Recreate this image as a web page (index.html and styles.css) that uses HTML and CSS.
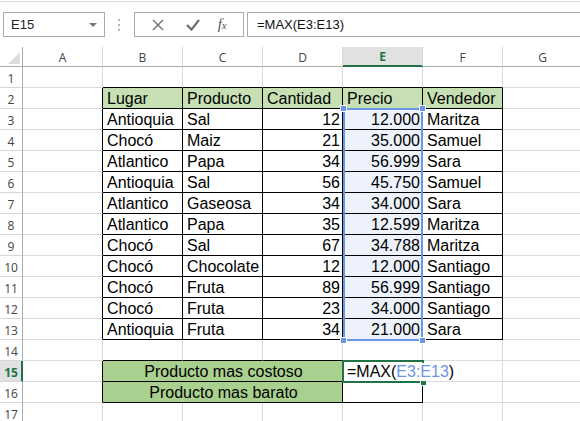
FILE: index.html
```html
<!DOCTYPE html>
<html>
<head>
<meta charset="utf-8">
<link rel="stylesheet" href="styles.css">
</head>
<body>
<div class="topbar">
  <div class="namebox"><span class="nb-text">E15</span><span class="caret"></span></div>
  <div class="dots"><i></i><i></i><i></i></div>
  <div class="fxbox">
    <svg class="ico" width="20" height="20" viewBox="0 0 20 20"><path d="M5 5 L15 15 M15 5 L5 15" stroke="#6f6f6f" stroke-width="1.4" fill="none"/></svg>
    <svg class="ico" width="20" height="20" viewBox="0 0 20 20"><path d="M4 10 L8.5 14.5 L16 5" stroke="#6f6f6f" stroke-width="2.2" fill="none"/></svg>
    <span class="fx">f<span class="fxx">x</span></span>
  </div>
  <div class="formula">=MAX(E3:E13)</div>
</div>

<div class="stack">
  <div class="sheet">
    <div class="corner"><svg width="23" height="20" viewBox="0 0 23 20"><polygon points="8,17 20,17 20,5" fill="#dcdcdc"/></svg></div>
    <div class="ch">A</div><div class="ch">B</div><div class="ch">C</div><div class="ch">D</div><div class="ch act">E</div><div class="ch">F</div><div class="ch">G</div>

    <div class="rh">1</div><div class="c"></div><div class="c ab"></div><div class="c ab"></div><div class="c ab"></div><div class="c ab"></div><div class="c ab"></div><div class="c"></div>

    <div class="rh">2</div><div class="c lf"></div><div class="c t hd">Lugar</div><div class="c t hd">Producto</div><div class="c t hd">Cantidad</div><div class="c t hd">Precio</div><div class="c t hd">Vendedor</div><div class="c"></div>

    <div class="rh">3</div><div class="c lf"></div><div class="c t">Antioquia</div><div class="c t">Sal</div><div class="c t n">12</div><div class="c t n sel">12.000</div><div class="c t">Maritza</div><div class="c"></div>
    <div class="rh">4</div><div class="c lf"></div><div class="c t">Chocó</div><div class="c t">Maiz</div><div class="c t n">21</div><div class="c t n sel">35.000</div><div class="c t">Samuel</div><div class="c"></div>
    <div class="rh">5</div><div class="c lf"></div><div class="c t">Atlantico</div><div class="c t">Papa</div><div class="c t n">34</div><div class="c t n sel">56.999</div><div class="c t">Sara</div><div class="c"></div>
    <div class="rh">6</div><div class="c lf"></div><div class="c t">Antioquia</div><div class="c t">Sal</div><div class="c t n">56</div><div class="c t n sel">45.750</div><div class="c t">Samuel</div><div class="c"></div>
    <div class="rh">7</div><div class="c lf"></div><div class="c t">Atlantico</div><div class="c t">Gaseosa</div><div class="c t n">34</div><div class="c t n sel">34.000</div><div class="c t">Sara</div><div class="c"></div>
    <div class="rh">8</div><div class="c lf"></div><div class="c t">Atlantico</div><div class="c t">Papa</div><div class="c t n">35</div><div class="c t n sel">12.599</div><div class="c t">Maritza</div><div class="c"></div>
    <div class="rh">9</div><div class="c lf"></div><div class="c t">Chocó</div><div class="c t">Sal</div><div class="c t n">67</div><div class="c t n sel">34.788</div><div class="c t">Maritza</div><div class="c"></div>
    <div class="rh">10</div><div class="c lf"></div><div class="c t">Chocó</div><div class="c t">Chocolate</div><div class="c t n">12</div><div class="c t n sel">12.000</div><div class="c t">Santiago</div><div class="c"></div>
    <div class="rh">11</div><div class="c lf"></div><div class="c t">Chocó</div><div class="c t">Fruta</div><div class="c t n">89</div><div class="c t n sel">56.999</div><div class="c t">Santiago</div><div class="c"></div>
    <div class="rh">12</div><div class="c lf"></div><div class="c t">Chocó</div><div class="c t">Fruta</div><div class="c t n">23</div><div class="c t n sel">34.000</div><div class="c t">Santiago</div><div class="c"></div>
    <div class="rh">13</div><div class="c lf"></div><div class="c t">Antioquia</div><div class="c t">Fruta</div><div class="c t n">34</div><div class="c t n sel">21.000</div><div class="c t">Sara</div><div class="c"></div>

    <div class="rh">14</div><div class="c"></div><div class="c ab"></div><div class="c ab"></div><div class="c ab"></div><div class="c ab"></div><div class="c"></div><div class="c"></div>

    <div class="rh act">15</div><div class="c lf"></div><div class="c t m">Producto mas costoso</div><div class="c t fm"><span class="fm-text">=MAX(<span class="ref">E3:E13</span>)</span></div><div class="c"></div><div class="c"></div>
    <div class="rh">16</div><div class="c lf"></div><div class="c t m">Producto mas barato</div><div class="c t"></div><div class="c"></div><div class="c"></div>
    <div class="rh">17</div><div class="c"></div><div class="c"></div><div class="c"></div><div class="c"></div><div class="c"></div><div class="c"></div><div class="c"></div>
  </div>
  <div class="overlay">
    <div class="range"><span class="hdl tl"></span><span class="hdl tr"></span><span class="hdl bl"></span><span class="hdl br"></span></div>
    <div class="active"><span class="fill"></span></div>
  </div>
</div>
</body>
</html>
```

FILE: styles.css
```css
html, body {
  margin: 0;
  padding: 0;
  background: #fff;
  width: 580px;
  height: 421px;
  overflow: hidden;
}

.topbar {
  margin-top: 1px;
  border-top: 1px solid #dadada;
  height: 35px;
  padding-top: 10px;
  display: flex;
  align-items: flex-start;
  font-family: "Liberation Sans", Arial, sans-serif;
}

.namebox {
  margin-left: 3px;
  width: 100px;
  height: 23px;
  border: 1px solid #ababab;
  display: flex;
  align-items: center;
  justify-content: space-between;
  font-size: 13px;
  color: #222;
}
.nb-text { padding-left: 7px; }
.caret {
  margin-right: 7px;
  width: 0;
  height: 0;
  border-left: 4px solid transparent;
  border-right: 4px solid transparent;
  border-top: 4px solid #777;
}

.dots {
  width: 30px;
  height: 25px;
  display: flex;
  flex-direction: column;
  align-items: center;
  justify-content: center;
  gap: 3px;
  margin-left: -1px;
}
.dots i {
  display: block;
  width: 2px;
  height: 2px;
  background: #b5b5b5;
}

.fxbox {
  height: 23px;
  border: 1px solid #ababab;
  display: flex;
  align-items: center;
  justify-content: space-around;
  padding: 0 4px 0 6px;
  box-sizing: content-box;
  width: 98px;
}
.ico { display: block; }
.fx {
  font-family: "Liberation Serif", "Times New Roman", serif;
  font-style: italic;
  font-size: 15px;
  color: #555;
  width: 14px;
}
.fxx { font-size: 11px; }

.formula {
  margin-left: 3px;
  flex: 1;
  margin-right: -4px;
  height: 23px;
  border: 1px solid #ababab;
  font-size: 13px;
  line-height: 23px;
  padding-left: 9px;
  color: #111;
}

.stack {
  display: grid;
}
.stack > .sheet, .stack > .overlay {
  grid-area: 1 / 1;
}

.sheet, .overlay {
  display: grid;
  grid-template-columns: 23px repeat(7, 80px);
  grid-template-rows: 20px repeat(17, 21px);
}
.overlay {
  position: relative;
  z-index: 1;
}

.corner {
  border-right: 1px solid #ababab;
  border-bottom: 1px solid #ababab;
  box-sizing: border-box;
}
.corner svg { display: block; }

.ch {
  box-sizing: border-box;
  border-right: 1px solid #d6d6d6;
  border-bottom: 1px solid #ababab;
  font-family: "Open Sans", "DejaVu Sans", sans-serif;
  font-size: 12px;
  color: #444;
  display: flex;
  align-items: center;
  justify-content: center;
  padding-top: 1px;
}
.ch.act {
  background: #e1e1e1;
  border-bottom: 2px solid #217346;
  color: #217346;
  font-weight: bold;
}

.rh {
  box-sizing: border-box;
  border-right: 1px solid #ababab;
  border-bottom: 1px solid #d6d6d6;
  font-family: "Open Sans", "DejaVu Sans", sans-serif;
  font-size: 12px;
  color: #444;
  display: flex;
  align-items: center;
  justify-content: center;
  padding-top: 2px;
}
.rh.act {
  background: #e1e1e1;
  border-right: 2px solid #217346;
  color: #217346;
  font-weight: bold;
  padding-left: 1px;
}

.c {
  box-sizing: border-box;
  border-right: 1px solid #dadada;
  border-bottom: 1px solid #dadada;
  font-family: "Liberation Sans", Arial, sans-serif;
  font-size: 16px;
  line-height: 18px;
  color: #000;
  display: flex;
  align-items: flex-end;
  padding: 0 2px 0 4px;
  white-space: nowrap;
  min-width: 0;
}
.c.ab { border-bottom-color: #000; }
.c.lf { border-right-color: #000; }
.c.t {
  border-right-color: #000;
  border-bottom-color: #000;
}
.c.hd { background: #c6e0b4; }
.c.n { justify-content: flex-end; }
.c.sel { background: #edf2fc; }
.c.m {
  grid-column: span 3;
  background: #a9d08e;
  justify-content: center;
}
.c.fm { overflow: visible; }
.fm-text {
  position: relative;
  z-index: 2;
  background: #fff;
  padding-right: 2px;
}
.ref { color: #6b95e6; }

.range {
  grid-row: 4 / 15;
  grid-column: 6 / 7;
  margin: -1px 0 -1px 0;
  border: 2px solid #6b95e6;
  position: relative;
}
.hdl {
  position: absolute;
  width: 5px;
  height: 5px;
  background: #6b95e6;
  border: 1px solid #fff;
}
.hdl.tl { left: -5px; top: -5px; }
.hdl.tr { right: -5px; top: -5px; }
.hdl.bl { left: -5px; bottom: -5px; }
.hdl.br { right: -5px; bottom: -5px; }

.active {
  grid-row: 16 / 17;
  grid-column: 6 / 7;
  margin: -1px -1px -1px -1px;
  border: 2px solid #217346;
  position: relative;
}
.fill {
  position: absolute;
  right: -5px;
  bottom: -5px;
  width: 5px;
  height: 5px;
  background: #217346;
  border: 1px solid #fff;
}
```
